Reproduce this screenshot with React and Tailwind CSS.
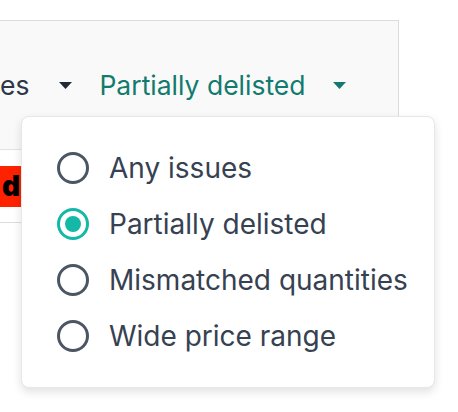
import { useState } from 'react';

const options = ['Any issues', 'Partially delisted', 'Mismatched quantities', 'Wide price range'];

function Caret({ className }) {
    return (
        <svg width="13" height="7" viewBox="0 0 13 7" className={className}>
            <path d="M0 0h13L6.5 7z" fill="currentColor" />
        </svg>
    );
}

function Radio({ checked }) {
    if (checked) {
        return (
            <span className="flex h-[32px] w-[32px] shrink-0 items-center justify-center rounded-full border-[3px] border-[#14b8a6]">
                <span className="h-[16px] w-[16px] rounded-full bg-[#14b8a6]" />
            </span>
        );
    }
    return <span className="h-[32px] w-[32px] shrink-0 rounded-full border-[3px] border-[#4b5563]" />;
}

export default function App() {
    const [selected, setSelected] = useState('Partially delisted');

    return (
        <div className="relative h-[412px] w-[458px] overflow-hidden bg-white font-['Inter','Noto_Sans',sans-serif]">
            <div className="mt-[20px] w-[399px] border-t border-r border-b border-[#dcdcdc] bg-[#f9f9f9]">
                <div className="flex h-[128px] items-center text-[26.5px] leading-none">
                    <span className="text-[#2d3748]">es</span>
                    <Caret className="ml-[30px] text-[#1f2937]" />
                    <span className="ml-[27px] text-[#127a6e]">{selected}</span>
                    <Caret className="ml-[27px] text-[#127a6e]" />
                </div>
                <div className="flex h-[73px] items-center border-t border-[#e2e2e2] bg-white">
                    <div className="flex h-[41px] w-[21px] items-center justify-end bg-[#ff2200] pr-[1px] text-[28px] font-black leading-none text-black">
                        d
                    </div>
                </div>
            </div>

            <div className="absolute left-[21px] top-[116px] w-[414px] rounded-[8px] border border-[#e5e7eb] bg-white py-[23px] shadow-[0_4px_10px_rgba(0,0,0,0.12)]">
                {options.map((option) => (
                    <button
                        type="button"
                        key={option}
                        onClick={() => setSelected(option)}
                        className="flex h-[56px] w-full items-center gap-[20px] pl-[35px] text-left text-[28px] leading-none text-[#364152]"
                    >
                        <Radio checked={option === selected} />
                        <span>{option}</span>
                    </button>
                ))}
            </div>
        </div>
    );
}
